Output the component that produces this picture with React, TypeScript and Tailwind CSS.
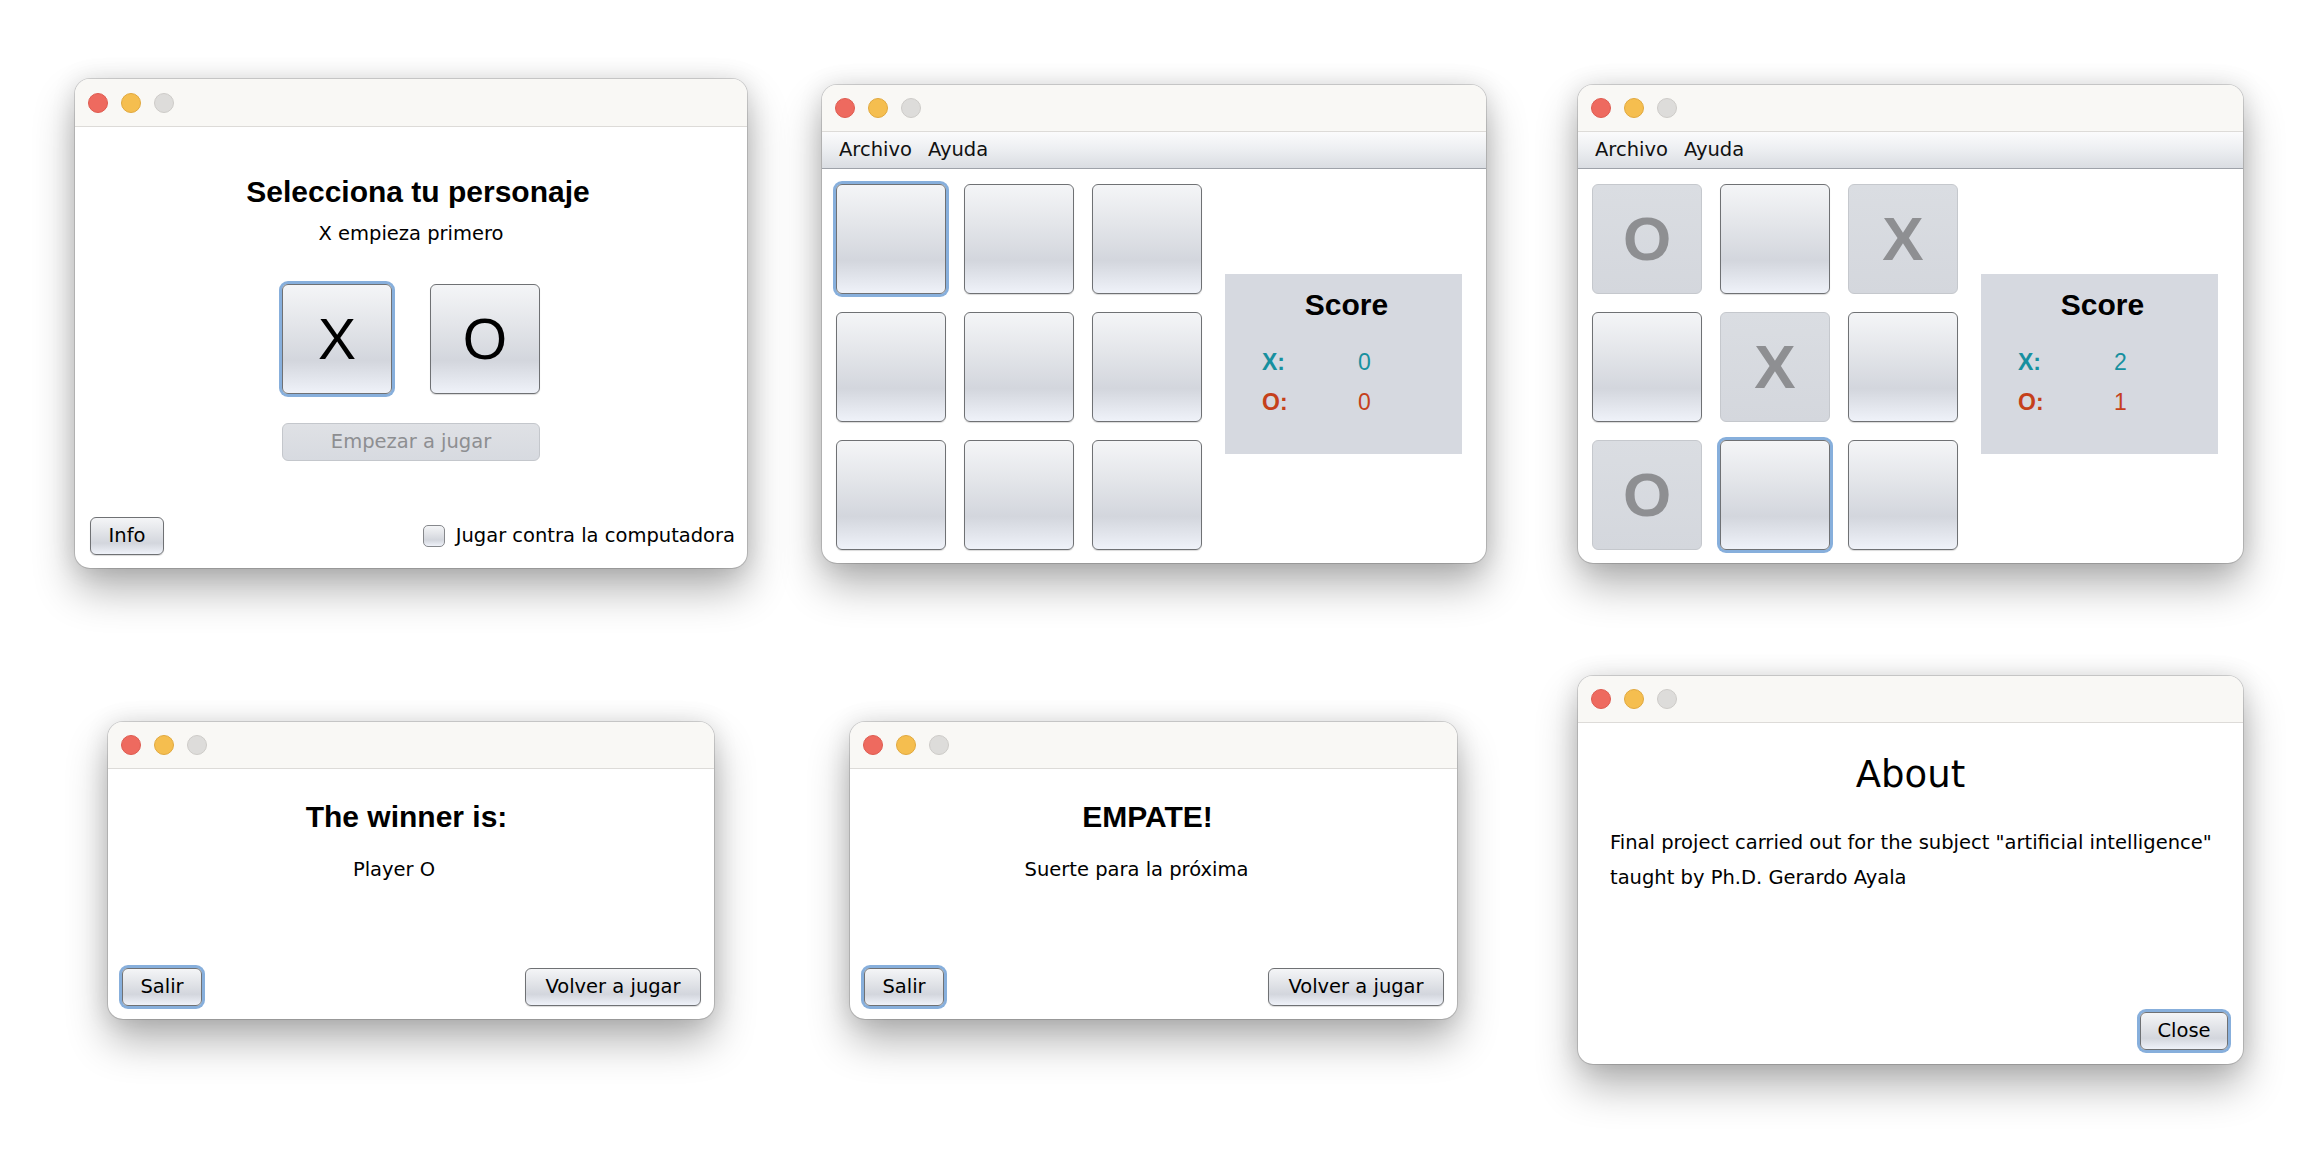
import React from 'react';

const lucida = "font-['DejaVu_Sans','Open_Sans',sans-serif]";
const helv = "font-['Liberation_Sans',Arial,sans-serif]";

const aquaBg =
  'bg-[linear-gradient(to_bottom,#f4f5f7_0%,#e4e6ea_35%,#d3d6dd_70%,#eff2f9_100%)]';

const TrafficLights = () => (
  <div className="flex items-center gap-[13px]">
    <span className="size-5 rounded-full border border-[#de5b50] bg-[#ee6a5f]" />
    <span className="size-5 rounded-full border border-[#e0a83e] bg-[#f5be4f]" />
    <span className="size-5 rounded-full border border-[#cdcbc8] bg-[#dddcda]" />
  </div>
);

const Window = ({
  className = '',
  titleH = 'h-[47px]',
  children,
}: {
  className?: string;
  titleH?: string;
  children: React.ReactNode;
}) => (
  <div
    className={`flex shrink-0 flex-col overflow-hidden rounded-[15px] bg-white shadow-[0_0_0_1px_rgba(0,0,0,0.14),0_22px_42px_rgba(0,0,0,0.3),0_0_24px_rgba(0,0,0,0.12)] ${className}`}
  >
    <div
      className={`flex shrink-0 items-center border-b border-[#dddbd8] bg-[#f9f8f5] pl-[13px] ${titleH}`}
    >
      <TrafficLights />
    </div>
    {children}
  </div>
);

const AquaButton = ({
  children,
  className = '',
  focused = false,
}: {
  children: React.ReactNode;
  className?: string;
  focused?: boolean;
}) => (
  <button
    className={`flex h-[38px] items-center justify-center rounded-[6px] border border-[#6f7174] text-[19.5px] text-black ${aquaBg} ${lucida} ${
      focused
        ? 'shadow-[0_0_0_3px_#87afdc]'
        : 'shadow-[0_1px_1px_rgba(0,0,0,0.15)]'
    } ${className}`}
  >
    {children}
  </button>
);

const Cell = ({ mark, focused }: { mark?: string; focused?: boolean }) => {
  if (mark) {
    return (
      <div
        className={`flex size-[110px] items-center justify-center rounded-[6px] border border-[#c5c8cd] bg-[linear-gradient(to_bottom,#dadde2,#d4d7dd)] text-[62px] leading-none font-bold text-[#8e8f92] ${helv}`}
      >
        {mark}
      </div>
    );
  }
  return (
    <div
      className={`size-[110px] rounded-[6px] border border-[#6f7174] ${aquaBg} ${
        focused
          ? 'shadow-[0_0_0_3px_#87afdc]'
          : 'shadow-[0_1px_1px_rgba(0,0,0,0.15)]'
      }`}
    />
  );
};

const ScoreBox = ({ x, o }: { x: number; o: number }) => (
  <div className={`mt-[90px] ml-[23px] h-[180px] w-[237px] shrink-0 bg-[#d6d9e0] pt-[13px] ${helv}`}>
    <div className="pl-[6px] text-center text-[30px] leading-[36px] font-bold text-black">Score</div>
    <div className="mt-[19px] grid grid-cols-[96px_auto] pl-[37px] text-[23px] leading-[40px]">
      <span className="font-bold text-[#17909f]">X:</span>
      <span className="text-[#17909f]">{x}</span>
      <span className="font-bold text-[#c5401b]">O:</span>
      <span className="text-[#c5401b]">{o}</span>
    </div>
  </div>
);

const BoardWindow = ({
  cells,
  focusIndex,
  x,
  o,
  className = '',
}: {
  cells: string[];
  focusIndex: number;
  x: number;
  o: number;
  className?: string;
}) => (
  <Window className={`h-[478px] ${className}`}>
    <div
      className={`flex h-[37px] shrink-0 items-center gap-[16px] border-b border-[#9ea2a9] bg-[linear-gradient(to_bottom,#fbfbfc,#eceef1_50%,#dadde2)] pl-[17px] text-[19.5px] text-[#111] ${lucida}`}
    >
      <span>Archivo</span>
      <span>Ayuda</span>
    </div>
    <div className="flex flex-1 items-start pt-[15px] pl-[14px]">
      <div className="grid grid-cols-[110px_110px_110px] gap-[18px]">
        {cells.map((c, i) => (
          <Cell key={i} mark={c || undefined} focused={i === focusIndex} />
        ))}
      </div>
      <ScoreBox x={x} o={o} />
    </div>
  </Window>
);

const ResultWindow = ({
  title,
  message,
  className = '',
  titlePad = 'pr-[9px]',
}: {
  title: string;
  message: string;
  className?: string;
  titlePad?: string;
}) => (
  <Window className={`h-[297px] ${className}`}>
    <div className="flex flex-1 flex-col pt-[30px]">
      <div className={`text-center text-[30px] leading-[36px] font-bold text-black ${helv} ${titlePad}`}>
        {title}
      </div>
      <div className={`mt-[23px] pr-[34px] text-center text-[19.5px] leading-[24px] text-black ${lucida}`}>
        {message}
      </div>
      <div className="mt-auto flex items-center justify-between pr-[13px] pb-[13px] pl-[14px]">
        <AquaButton focused className="w-[80px]">
          Salir
        </AquaButton>
        <AquaButton className="w-[176px]">Volver a jugar</AquaButton>
      </div>
    </div>
  </Window>
);

export default function App() {
  return (
    <div className="h-[1172px] w-[2310px] overflow-hidden bg-white">
      <div className="mt-[79px] flex items-center pl-[75px]">
        <Window className="h-[489px] w-[672px]" titleH="h-[48px]">
          <div className="flex flex-1 flex-col items-center pt-[47px]">
            <h1 className={`pl-[14px] text-[30px] leading-[36px] font-bold text-black ${helv}`}>
              Selecciona tu personaje
            </h1>
            <p className={`mt-[12px] text-[19.5px] leading-[24px] text-black ${lucida}`}>
              X empieza primero
            </p>
            <div className={`mt-[38px] flex gap-[38px] text-[57px] leading-none text-black ${helv}`}>
              <button
                className={`flex size-[110px] items-center justify-center rounded-[6px] border border-[#6f7174] ${aquaBg} shadow-[0_0_0_3px_#87afdc]`}
              >
                X
              </button>
              <button
                className={`flex size-[110px] items-center justify-center rounded-[6px] border border-[#6f7174] ${aquaBg} shadow-[0_1px_1px_rgba(0,0,0,0.15)]`}
              >
                O
              </button>
            </div>
            <button
              disabled
              className={`mt-[29px] flex h-[38px] w-[258px] items-center justify-center rounded-[6px] border border-[#c4c7cc] bg-[linear-gradient(to_bottom,#dfe1e5,#d7dae0)] text-[19.5px] text-[#8d8e91] ${lucida}`}
            >
              Empezar a jugar
            </button>
            <div className="mt-auto flex w-full items-center justify-between pr-[12px] pb-[13px] pl-[15px]">
              <AquaButton className="w-[74px]">Info</AquaButton>
              <label className={`flex items-center gap-[11px] text-[19.5px] text-black ${lucida}`}>
                <span
                  className={`size-[22px] rounded-[5px] border border-[#86888c] ${aquaBg}`}
                />
                Jugar contra la computadora
              </label>
            </div>
          </div>
        </Window>

        <BoardWindow
          className="ml-[75px] w-[664px]"
          cells={['', '', '', '', '', '', '', '', '']}
          focusIndex={0}
          x={0}
          o={0}
        />

        <BoardWindow
          className="ml-[92px] w-[665px]"
          cells={['O', '', 'X', '', 'X', '', 'O', '', '']}
          focusIndex={7}
          x={2}
          o={1}
        />
      </div>

      <div className="mt-[108px] flex items-center">
        <ResultWindow
          className="ml-[108px] w-[606px]"
          title="The winner is:"
          message="Player O"
        />
        <ResultWindow
          className="ml-[136px] w-[607px]"
          title="EMPATE!"
          message="Suerte para la próxima"
          titlePad="pr-[12px]"
        />
        <Window className="ml-[121px] h-[388px] w-[665px]">
          <div className="flex flex-1 flex-col pt-[30px]">
            <div className={`text-center text-[37px] leading-[44px] text-black ${lucida}`}>About</div>
            <p className={`mt-[28px] w-[660px] pl-[32px] text-[19.5px] leading-[35px] text-black ${lucida}`}>
              Final project carried out for the subject "artificial intelligence" taught by Ph.D.
              Gerardo Ayala
            </p>
            <div className="mt-auto flex justify-end pr-[15px] pb-[14px]">
              <AquaButton focused className="w-[88px]">
                Close
              </AquaButton>
            </div>
          </div>
        </Window>
      </div>
    </div>
  );
}
